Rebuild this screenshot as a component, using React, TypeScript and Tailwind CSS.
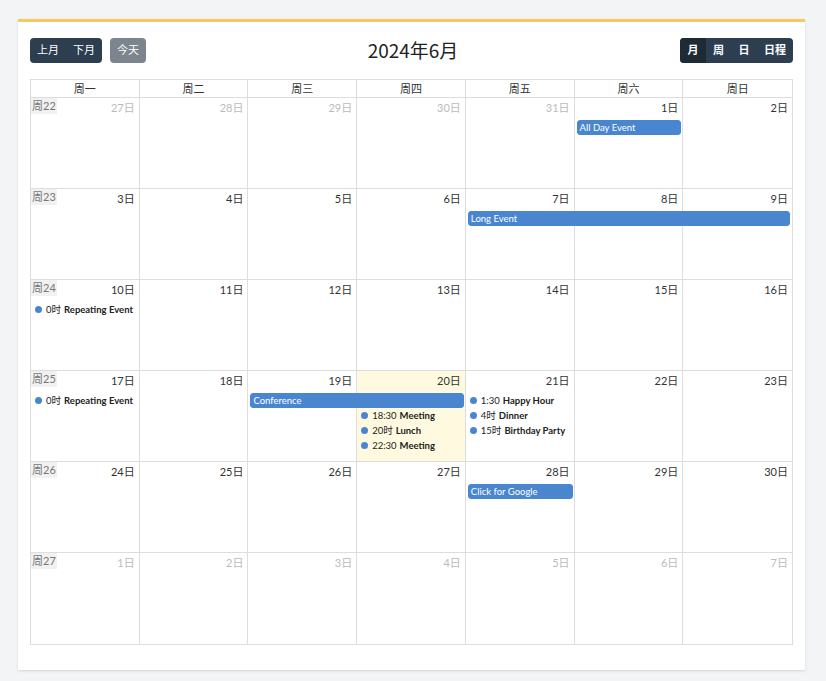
import React from "react";

type Ev =
  | { kind: "bar"; col: number; span: number; row: number; title: string }
  | { kind: "dot"; col: number; row: number; time: string; title: string };

type Week = {
  no: number;
  days: { d: number; other?: boolean; today?: boolean }[];
  events: Ev[];
};

const weekdays = ["周一", "周二", "周三", "周四", "周五", "周六", "周日"];

const weeks: Week[] = [
  {
    no: 22,
    days: [
      { d: 27, other: true },
      { d: 28, other: true },
      { d: 29, other: true },
      { d: 30, other: true },
      { d: 31, other: true },
      { d: 1 },
      { d: 2 },
    ],
    events: [{ kind: "bar", col: 6, span: 1, row: 2, title: "All Day Event" }],
  },
  {
    no: 23,
    days: [3, 4, 5, 6, 7, 8, 9].map((d) => ({ d })),
    events: [{ kind: "bar", col: 5, span: 3, row: 2, title: "Long Event" }],
  },
  {
    no: 24,
    days: [10, 11, 12, 13, 14, 15, 16].map((d) => ({ d })),
    events: [{ kind: "dot", col: 1, row: 2, time: "0时", title: "Repeating Event" }],
  },
  {
    no: 25,
    days: [17, 18, 19, 20, 21, 22, 23].map((d) => ({ d, today: d === 20 })),
    events: [
      { kind: "dot", col: 1, row: 2, time: "0时", title: "Repeating Event" },
      { kind: "bar", col: 3, span: 2, row: 2, title: "Conference" },
      { kind: "dot", col: 4, row: 3, time: "18:30", title: "Meeting" },
      { kind: "dot", col: 4, row: 4, time: "20时", title: "Lunch" },
      { kind: "dot", col: 4, row: 5, time: "22:30", title: "Meeting" },
      { kind: "dot", col: 5, row: 2, time: "1:30", title: "Happy Hour" },
      { kind: "dot", col: 5, row: 3, time: "4时", title: "Dinner" },
      { kind: "dot", col: 5, row: 4, time: "15时", title: "Birthday Party" },
    ],
  },
  {
    no: 26,
    days: [24, 25, 26, 27, 28, 29, 30].map((d) => ({ d })),
    events: [{ kind: "bar", col: 5, span: 1, row: 2, title: "Click for Google" }],
  },
  {
    no: 27,
    days: [1, 2, 3, 4, 5, 6, 7].map((d) => ({ d, other: true })),
    events: [],
  },
];

const colStart = ["", "col-start-1", "col-start-2", "col-start-3", "col-start-4", "col-start-5", "col-start-6", "col-start-7"];
const colSpan = ["", "col-span-1", "col-span-2", "col-span-3"];
const rowStart = ["", "row-start-1", "row-start-2", "row-start-3", "row-start-4", "row-start-5"];

function EventItem({ ev }: { ev: Ev }) {
  if (ev.kind === "bar") {
    return (
      <div
        className={`${colStart[ev.col]} ${colSpan[ev.span]} ${rowStart[ev.row]} z-10 mx-[2px] h-[15px] rounded-[3px] border border-[#4a86d0] bg-[#4a86d0] pl-[2px] text-[9.5px] leading-[13px] text-white`}
      >
        {ev.title}
      </div>
    );
  }
  return (
    <div className={`${colStart[ev.col]} ${rowStart[ev.row]} z-10 flex items-center pl-[4px] text-[9.5px] leading-[15px] text-[#222]`}>
      <span className="mr-[4px] h-[7px] w-[7px] rounded-full bg-[#4a86d0]" />
      <span>{ev.time}</span>
      <span className="ml-[3px] font-bold">{ev.title}</span>
    </div>
  );
}

export default function App() {
  return (
    <div
      className="min-h-[681px] bg-[#f3f4f6] pt-[19px]"
      style={{ fontFamily: 'Lato, "Noto Sans CJK SC", sans-serif' }}
    >
      <div className="ml-[18px] w-[787px] border-t-[3px] border-[#f6c85f] bg-white px-[12px] pb-[25px] pt-[16px] shadow-sm">
        {/* toolbar */}
        <div className="flex h-[25px] items-center justify-between">
          <div className="flex gap-[8px]">
            <div className="flex h-[25px] overflow-hidden rounded-[4px] bg-[#2c3e50] text-[11px] text-white">
              <button className="px-[7px]">上月</button>
              <button className="px-[7px]">下月</button>
            </div>
            <button className="h-[25px] rounded-[4px] bg-[#7c848e] px-[7px] text-[11px] text-white">今天</button>
          </div>
          <div className="text-[19px] text-[#222]" style={{ fontFamily: '"Noto Sans CJK SC", sans-serif' }}>
            2024年6月
          </div>
          <div className="flex h-[25px] overflow-hidden rounded-[4px] bg-[#2c3e50] text-[11px] font-bold text-white">
            <button className="w-[26px] bg-[#1e2b37]">月</button>
            <button className="w-[25px]">周</button>
            <button className="w-[26px]">日</button>
            <button className="w-[36px]">日程</button>
          </div>
        </div>

        {/* grid */}
        <div className="mt-[16px] border border-[#ddd]">
          <div className="grid h-[18px] grid-cols-7 border-b border-[#ddd]">
            {weekdays.map((w, i) => (
              <div
                key={w}
                className={`text-center text-[11px] leading-[17px] text-[#333] ${i < 6 ? "border-r border-[#ddd]" : ""}`}
              >
                {w}
              </div>
            ))}
          </div>
          {weeks.map((wk, wi) => (
            <div
              key={wk.no}
              className={`grid h-[91px] grid-cols-7 grid-rows-[22px_15px_15px_15px_15px_1fr] ${wi < 5 ? "border-b border-[#ddd]" : "h-[90px]"}`}
            >
              {wk.days.map((day, i) => (
                <div
                  key={i}
                  className={`${colStart[i + 1]} row-[1/-1] relative flex items-start justify-between ${i < 6 ? "border-r border-[#ddd]" : ""} ${day.today ? "bg-[#fffadf]" : ""}`}
                >
                  {i === 0 ? (
                    <span className="bg-[#f1f1f1] px-[1px] text-[11px] leading-[16px] text-[#777]">周{wk.no}</span>
                  ) : (
                    <span />
                  )}
                  <span className={`pr-[4px] pt-[2px] text-[11px] leading-[16px] ${day.other ? "text-[#bbb]" : "text-[#333]"}`}>
                    {day.d}日
                  </span>
                </div>
              ))}
              {wk.events.map((ev, i) => (
                <EventItem key={i} ev={ev} />
              ))}
            </div>
          ))}
        </div>
      </div>
    </div>
  );
}
